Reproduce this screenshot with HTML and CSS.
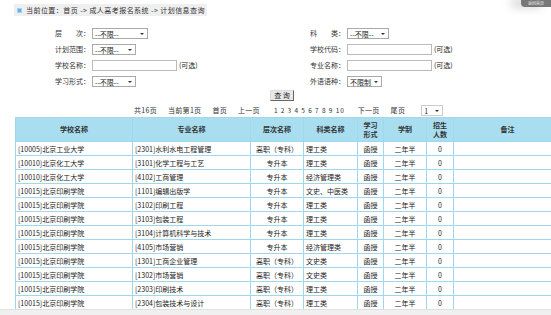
FILE: index.html
```html
<!DOCTYPE html>
<html lang="zh-CN">
<head>
  <meta charset="UTF-8">
  <title>计划信息查询</title>
  <link rel="stylesheet" href="styles.css">
</head>
<body>
  <div class="home-tab">返回首页</div>

  <div class="crumb">
    <span class="crumb-icon"></span>
    当前位置：首页 -&gt; 成人高考报名系统 -&gt; 计划信息查询
  </div>

  <table class="search">
    <tr>
      <td class="lbl">层　　次：</td>
      <td class="ctl"><span class="sel w56">--不限--</span></td>
      <td class="lbl">科　　类：</td>
      <td class="ctl"><span class="sel w42">--不限--</span></td>
    </tr>
    <tr>
      <td class="lbl">计划范围：</td>
      <td class="ctl"><span class="sel w44">--不限--</span></td>
      <td class="lbl">学校代码：</td>
      <td class="ctl"><span class="txt"></span><span class="opt">(可选)</span></td>
    </tr>
    <tr>
      <td class="lbl">学校名称：</td>
      <td class="ctl"><span class="txt"></span><span class="opt">(可选)</span></td>
      <td class="lbl">专业名称：</td>
      <td class="ctl"><span class="txt"></span><span class="opt">(可选)</span></td>
    </tr>
    <tr>
      <td class="lbl">学习形式：</td>
      <td class="ctl"><span class="sel w44">--不限--</span></td>
      <td class="lbl">外语语种：</td>
      <td class="ctl"><span class="sel w35">不限制</span></td>
    </tr>
  </table>

  <div class="btn-row"><button class="query">查 询</button></div>

  <div class="pager">
    <span>共16页</span>
    <span>当前第1页</span>
    <span>首页</span>
    <span>上一页</span>
    <span class="nums">1 2 3 4 5 6 7 8 9 10</span>
    <span>下一页</span>
    <span>尾页</span>
    <span class="sel w22">1</span>
  </div>

  <table class="plan">
    <colgroup>
      <col style="width:117px"><col style="width:118px"><col style="width:53px"><col style="width:54px">
      <col style="width:26px"><col style="width:43px"><col style="width:27px"><col style="width:108px">
    </colgroup>
    <thead>
      <tr>
        <th>学校名称</th><th>专业名称</th><th>层次名称</th><th>科类名称</th>
        <th>学习<br>形式</th><th>学制</th><th>招生<br>人数</th><th>备注</th>
      </tr>
    </thead>
    <tbody id="rows"></tbody>
  </table>

  <div class="hscroll"></div>

  <script>
    var data = [
      ['[10005]北京工业大学', '[2301]水利水电工程管理', '高职（专科）', '理工类'],
      ['[10010]北京化工大学', '[3101]化学工程与工艺', '专升本', '理工类'],
      ['[10010]北京化工大学', '[4102]工商管理', '专升本', '经济管理类'],
      ['[10015]北京印刷学院', '[1101]编辑出版学', '专升本', '文史、中医类'],
      ['[10015]北京印刷学院', '[3102]印刷工程', '专升本', '理工类'],
      ['[10015]北京印刷学院', '[3103]包装工程', '专升本', '理工类'],
      ['[10015]北京印刷学院', '[3104]计算机科学与技术', '专升本', '理工类'],
      ['[10015]北京印刷学院', '[4105]市场营销', '专升本', '经济管理类'],
      ['[10015]北京印刷学院', '[1301]工商企业管理', '高职（专科）', '文史类'],
      ['[10015]北京印刷学院', '[1302]市场营销', '高职（专科）', '文史类'],
      ['[10015]北京印刷学院', '[2303]印刷技术', '高职（专科）', '理工类'],
      ['[10015]北京印刷学院', '[2304]包装技术与设计', '高职（专科）', '理工类']
    ];
    var html = '';
    data.forEach(function (r) {
      html += '<tr><td>' + r[0] + '</td><td>' + r[1] + '</td><td class="c">' + r[2] +
        '</td><td>' + r[3] + '</td><td class="c">函授</td><td class="c">二年半</td>' +
        '<td class="c">0</td><td></td></tr>';
    });
    document.getElementById('rows').innerHTML = html;
  </script>
</body>
</html>
```

FILE: styles.css
```css
html, body {
  margin: 0;
  padding: 0;
  overflow: hidden;
}
body {
  font-family: "Noto Sans CJK SC", "DejaVu Sans", sans-serif;
  font-size: 7px;
  color: #222;
  background: #fff;
  width: 551px;
  height: 315px;
  position: relative;
}
.home-tab {
  position: absolute;
  top: 0;
  right: 0;
  width: 30px;
  height: 7px;
  line-height: 7px;
  font-size: 4px;
  color: #eee;
  text-align: center;
  background: #777;
  border-bottom-left-radius: 4px;
  box-shadow: -10px 0 10px #ccc;
}
.crumb {
  margin: 4px 0 0 14px;
  width: 190px;
  height: 12px;
  line-height: 12px;
  background: #efefef;
  padding-left: 3px;
  color: #333;
  letter-spacing: 0.45px;
}
.crumb-icon {
  display: inline-block;
  width: 5px;
  height: 5px;
  background: #5ab4e8;
  border: 1px solid #9ed3f1;
  box-sizing: border-box;
  margin-right: 2px;
  vertical-align: 0;
}
.search {
  border-collapse: collapse;
  margin: 9px 0 0 55px;
}
.search td {
  padding: 0;
  height: 16px;
  vertical-align: middle;
}
.search .lbl {
  width: 37px;
  color: #333;
}
.search td.ctl:nth-child(2) {
  width: 218px;
}
.sel {
  display: inline-block;
  height: 11px;
  line-height: 11px;
  border: 1px solid #aaa;
  box-sizing: border-box;
  padding-left: 2px;
  position: relative;
  background: #fff;
  vertical-align: middle;
}
.sel::after {
  content: "";
  position: absolute;
  right: 3px;
  top: 4px;
  border-left: 2px solid transparent;
  border-right: 2px solid transparent;
  border-top: 2px solid #333;
}
.w56 { width: 56px; }
.w44 { width: 44px; }
.w42 { width: 42px; }
.w35 { width: 35px; }
.w22 { width: 22px; }
.txt {
  display: inline-block;
  width: 85px;
  height: 11px;
  border: 1px solid #bbb;
  box-sizing: border-box;
  vertical-align: middle;
}
.opt {
  margin-left: 2px;
  vertical-align: middle;
}
.btn-row {
  padding-left: 270px;
  margin-top: 1px;
  height: 11px;
}
.query {
  font-family: inherit;
  font-size: 7px;
  width: 24px;
  height: 11px;
  padding: 0;
  line-height: 9px;
  background: #e8e8e8;
  border: 1px solid #777;
  border-color: #ddd #666 #666 #ddd;
  color: #222;
}
.pager {
  display: flex;
  align-items: center;
  gap: 11px;
  padding-left: 134px;
  height: 14px;
  margin-top: 2px;
  color: #333;
  letter-spacing: 0.3px;
}
.pager .nums {
  font-size: 6.5px;
  letter-spacing: 0.9px;
  margin-left: 3px;
  margin-right: 2px;
}
.pager .sel {
  margin-left: 5px;
  border-color: #ccc;
}
.plan {
  border-collapse: collapse;
  table-layout: fixed;
  width: 546px;
  margin-left: 15px;
}
.plan th, .plan td {
  border: 1px solid #9dd8ee;
  padding: 0 2px;
  white-space: nowrap;
  overflow: hidden;
}
.plan th {
  background: #a9def1;
  height: 23px;
  line-height: 9px;
  font-weight: bold;
  color: #333;
}
.plan td {
  height: 13px;
  line-height: 12px;
  color: #222;
}
.plan td.c {
  text-align: center;
}
.hscroll {
  position: absolute;
  left: 0;
  bottom: 0;
  width: 551px;
  height: 5px;
  background: #f0f0f0;
  border-top: 1px solid #e0e0e0;
}
```
